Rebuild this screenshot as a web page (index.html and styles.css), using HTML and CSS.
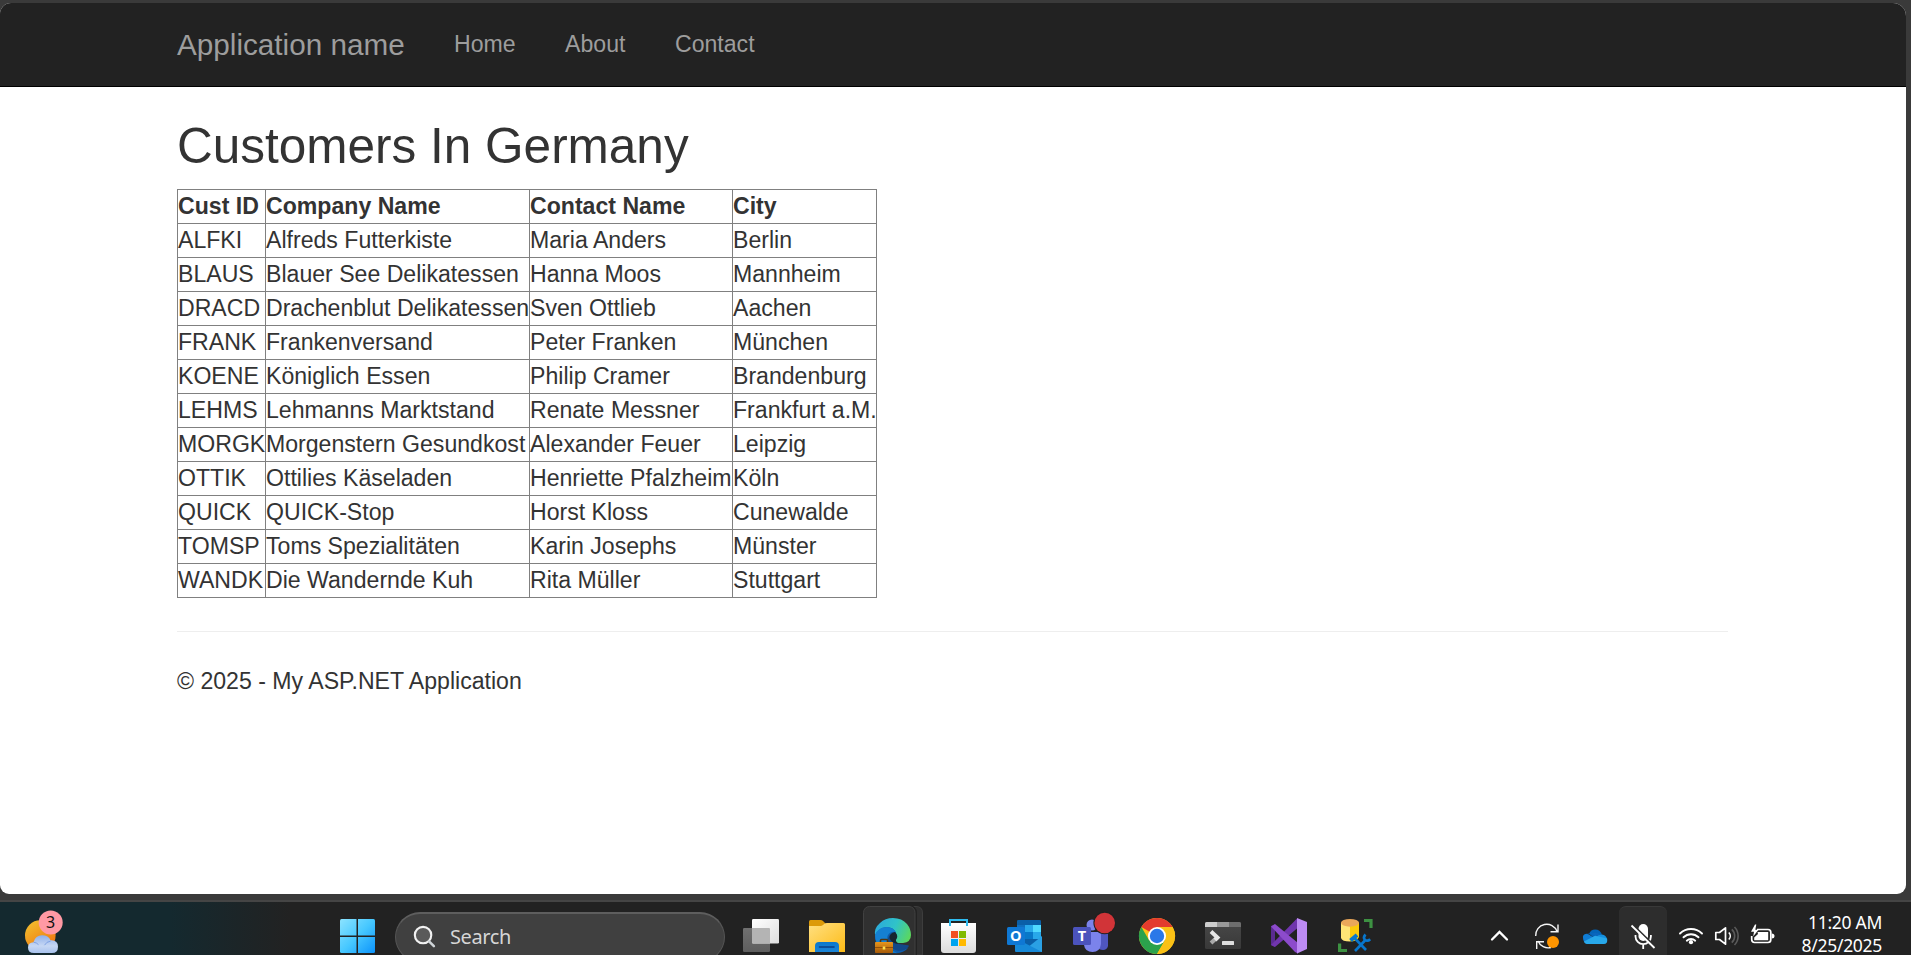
FILE: index.html
```html
<!DOCTYPE html>
<html lang="en">
<head>
<meta charset="utf-8">
<title>Customers In Germany</title>
<link rel="stylesheet" href="styles.css">
</head>
<body>
<div class="page">
  <header class="navbar">
    <nav class="container nav">
      <a class="brand">Application name</a>
      <a class="nav-link">Home</a>
      <a class="nav-link">About</a>
      <a class="nav-link">Contact</a>
    </nav>
  </header>
  <main class="container">
    <h2 class="title">Customers In Germany</h2>
    <table class="grid">
      <colgroup><col class="c-id"><col class="c-company"><col class="c-contact"><col class="c-city"></colgroup>
      <tr><th>Cust ID</th><th>Company Name</th><th>Contact Name</th><th>City</th></tr>
      <tr><td>ALFKI</td><td>Alfreds Futterkiste</td><td>Maria Anders</td><td>Berlin</td></tr>
      <tr><td>BLAUS</td><td>Blauer See Delikatessen</td><td>Hanna Moos</td><td>Mannheim</td></tr>
      <tr><td>DRACD</td><td>Drachenblut Delikatessen</td><td>Sven Ottlieb</td><td>Aachen</td></tr>
      <tr><td>FRANK</td><td>Frankenversand</td><td>Peter Franken</td><td>München</td></tr>
      <tr><td>KOENE</td><td>Königlich Essen</td><td>Philip Cramer</td><td>Brandenburg</td></tr>
      <tr><td>LEHMS</td><td>Lehmanns Marktstand</td><td>Renate Messner</td><td>Frankfurt a.M.</td></tr>
      <tr><td>MORGK</td><td>Morgenstern Gesundkost</td><td>Alexander Feuer</td><td>Leipzig</td></tr>
      <tr><td>OTTIK</td><td>Ottilies Käseladen</td><td>Henriette Pfalzheim</td><td>Köln</td></tr>
      <tr><td>QUICK</td><td>QUICK-Stop</td><td>Horst Kloss</td><td>Cunewalde</td></tr>
      <tr><td>TOMSP</td><td>Toms Spezialitäten</td><td>Karin Josephs</td><td>Münster</td></tr>
      <tr><td>WANDK</td><td>Die Wandernde Kuh</td><td>Rita Müller</td><td>Stuttgart</td></tr>
    </table>
    <hr class="rule">
    <footer class="foot">© 2025 - My ASP.NET Application</footer>
  </main>
</div>

<div class="taskbar">
  <svg class="weather" viewBox="0 0 88 53">
    <defs>
      <linearGradient id="sun" x1="0" y1="0" x2=".7" y2="1"><stop offset="0" stop-color="#f2c531"/><stop offset="1" stop-color="#f0730f"/></linearGradient>
      <linearGradient id="cloud" x1="0" y1="0" x2="0" y2="1"><stop offset="0" stop-color="#8fb0ea"/><stop offset=".6" stop-color="#c6d7f4"/><stop offset="1" stop-color="#a9c3ee"/></linearGradient>
    </defs>
    <circle cx="40.3" cy="33.5" r="15.3" fill="url(#sun)"/>
    <path d="M34 51q-6 0-6-5.500 0-5 5.500-5.300 2-7 8.500-7 6.500 0 8.500 5 7.500-.5 7.500 6.500 0 6.300-6 6.300z" fill="url(#cloud)"/>
    <path d="M33.500 40.200q3 .2 5 2.500M50.500 39.200q-4 .3-6 4" fill="none" stroke="#7fa2e4" stroke-width="1"/>
    <circle cx="50.700" cy="20.500" r="12" fill="#ff99a4"/>
    <text class="badge" x="50.700" y="26.200">3</text>
  </svg>

  <svg class="start" viewBox="0 0 36 53">
    <defs><linearGradient id="win" gradientUnits="userSpaceOnUse" x1="0" y1="17" x2="35" y2="51"><stop offset="0" stop-color="#8ce3ff"/><stop offset=".5" stop-color="#47c8ff"/><stop offset="1" stop-color="#0c93fb"/></linearGradient></defs>
    <g fill="url(#win)"><path d="M1.500 17H16.500V33.500H0V18.500Q0 17 1.500 17z"/><path d="M18 17H33.500Q35 17 35 18.500V33.500H18z"/><path d="M0 35H16.500V51H1.500Q0 51 0 49.500z"/><path d="M18 35H35V49.500Q35 51 33.500 51H18z"/></g>
  </svg>

  <div class="search">
    <svg class="search-icon" viewBox="0 0 24 24"><circle cx="10.500" cy="10.500" r="8.600" fill="#5a5a5a" stroke="#f2f2f2" stroke-width="2.200"/><path d="M16.800 17L21.800 22" stroke="#cfd4d8" stroke-width="2.600" stroke-linecap="round"/></svg>
    <span class="search-label">Search</span>
  </div>

  <div class="apps">
    <svg class="app" viewBox="0 0 66 53">
      <defs><linearGradient id="tv" x1="0" y1="0" x2="1" y2="1"><stop offset="0" stop-color="#fff"/><stop offset="1" stop-color="#dedede"/></linearGradient><linearGradient id="tv2" x1="0" y1="0" x2="0" y2="1"><stop offset="0" stop-color="#707070"/><stop offset="1" stop-color="#5e5e5e"/></linearGradient></defs>
      <rect x="15" y="26" width="27" height="24" rx="1.200" fill="url(#tv2)"/><rect x="24" y="17" width="27" height="24.500" rx="1.200" fill="url(#tv)"/><path d="M24 26H41q1 0 1 1V41.500H25q-1 0-1-1z" fill="#b4b4b4"/>
    </svg>
    <svg class="app" viewBox="0 0 66 53">
      <defs><linearGradient id="fo" x1="0" y1="0" x2="1" y2="1"><stop offset="0" stop-color="#ffe082"/><stop offset="1" stop-color="#fdbb16"/></linearGradient><linearGradient id="fb" x1="0" y1="0" x2="0" y2="1"><stop offset="0" stop-color="#0a78cc"/><stop offset="1" stop-color="#1a85d8"/></linearGradient></defs>
      <path d="M15 19.500q0-1.500 1.500-1.500h10q1.500 0 2.500 1l2.500 2.500V28H15z" fill="#dc9a09"/>
      <path d="M15 24h11.500q1.500 0 2.800-1.200l1.500-1.300q.8-.5 2-.5H49.500q1.500 0 1.500 1.500V50H15z" fill="url(#fo)"/>
      <path d="M21 50V44q0-4 4-4H41q4 0 4 4v6z" fill="url(#fb)"/><path d="M25.500 45H40" stroke="#0a3f85" stroke-width="1.600" stroke-linecap="round"/>
    </svg>
    <svg class="app" viewBox="0 0 66 53">
      <defs>
        <linearGradient id="ed1" gradientUnits="userSpaceOnUse" x1="16" y1="20" x2="51" y2="36"><stop offset="0" stop-color="#2ba9dc"/><stop offset=".5" stop-color="#30c3c8"/><stop offset="1" stop-color="#5fd955"/></linearGradient>
        <linearGradient id="bag" x1="0" y1="0" x2="0" y2="1"><stop offset="0" stop-color="#e7951c"/><stop offset="1" stop-color="#a65a08"/></linearGradient>
      </defs>
      <path d="M44 4.500h12q6.500 0 6.500 6.500V53H52z" fill="#303030" stroke="#3d3d3d"/>
      <rect x="3.500" y="4.500" width="52" height="56" rx="6" fill="#303030" stroke="#222" stroke-width="3"/>
      <rect x="3.500" y="4.500" width="51.500" height="56" rx="6" fill="#303030" stroke="#414141" stroke-width="1"/>
      <path d="M15 33Q14 26 20 21q5-5 13-5 9 0 14 6 4 5 4 11 0 7-8 8-7 .5-8-2-.3-1 1-2.500 2-4-2-7-9-5-19 3.500z" fill="url(#ed1)"/>
      <path d="M15 34q3-8 11-9 8 0 10 6-5-.5-7 4-2 5 3 10 4 4.500 16 1-5 6-14 5-19-1-19-17z" fill="#0d5cab"/>
      <path d="M15 33q3-8 12-8 6 .5 9 5-6-1-8.500 4-1.500 6 2.500 12 2 3 7 4.500-8 1.500-15-4-7-5-7-13.500z" fill="#1580d2"/>
      <path d="M35 31q3 4 0 7-1 3 4 4l7 1q3 0 3 1-4 6-12 4.500-7-2-9-8-1-8 7-9.500z" fill="#124888"/>
      <path d="M35 30q3 3 2 6-1.500 2-1 3l2 3q-7-1-8.500-6 0-5 5.500-6z" fill="#17252f"/>
      <path d="M20.500 40v-1.500q0-1 1-1h5q1 0 1 1V40" fill="none" stroke="#4c3514" stroke-width="1.600"/>
      <rect x="15" y="40" width="18" height="11" rx=".8" fill="url(#bag)"/><path d="M15 45.500H33" stroke="#8a4a08" stroke-width=".9"/><rect x="22.700" y="44.500" width="2.600" height="3" fill="#ffdf4d"/>
    </svg>
    <svg class="app" viewBox="0 0 66 53">
      <defs><linearGradient id="st" x1="0" y1="0" x2="0" y2="1"><stop offset="0" stop-color="#fff"/><stop offset="1" stop-color="#dcdcdc"/></linearGradient></defs>
      <path d="M15 21H50V48q0 3-3 3H18q-3 0-3-3z" fill="url(#st)"/><path d="M24 24V18H41V24" fill="none" stroke="#2fbcf0" stroke-width="2"/>
      <path d="M25 29h7v7h-7z" fill="#f25022"/><path d="M33 29h7v7h-7z" fill="#7fba00"/><path d="M25 37h7v7h-7z" fill="#00a4ef"/><path d="M33 37h7v7h-7z" fill="#ffb900"/>
    </svg>
    <svg class="app" viewBox="0 0 66 53">
      <rect x="25" y="18" width="24" height="26" rx="1.300" fill="#0a5fa8"/><path d="M25 23h8v14h-8z" fill="#0f6fbf"/><path d="M33 23h8v7h-8z" fill="#28a8ea"/><path d="M41 23h8v7h-8z" fill="#50d9ff"/><path d="M33 30h8v7h-8z" fill="#0878c9"/><path d="M41 30h8v7h-8z" fill="#28a8ea"/>
      <path d="M50 34V50H30z" fill="#2aa0e4"/><path d="M23 36l27 14H24q-1 0-1-1z" fill="#1689d8"/>
      <rect x="15" y="25" width="18" height="18" rx="1.500" fill="#0f78d4"/><text class="glyph" x="23.800" y="39.300">O</text>
    </svg>
    <svg class="app" viewBox="0 0 66 53">
      <circle cx="34" cy="23" r="5.500" fill="#7b83eb"/><path d="M41 31h9v13q-1 4-5 4t-6-3z" fill="#4f56be"/><path d="M26 30H42q1 0 1 1V42q-1 8-8.500 8T26 43z" fill="#7b83eb"/>
      <circle cx="46.700" cy="21" r="11.300" fill="#202020"/><circle cx="46.700" cy="21" r="10.300" fill="#d13438"/>
      <rect x="15" y="25" width="18" height="18" rx="1.500" fill="#4b53bc"/><text class="glyph" x="24" y="39.300">T</text>
    </svg>
    <svg class="app" viewBox="0 0 66 53">
      <circle cx="33" cy="34" r="18" fill="#fbc116"/>
      <path d="M33 34L17.400 25A18 18 0 0 1 48.600 25H33z" fill="#e33b2e"/><path d="M17.400 25A18 18 0 0 0 33 52L40.800 38.500 33 34 25.200 38.500z" fill="#2ba24c"/><path d="M33 25H48.600A18 18 0 0 1 33 52L40.800 38.500z" fill="#fbc116"/>
      <circle cx="33" cy="34" r="9" fill="#fff"/><circle cx="33" cy="34" r="7.200" fill="#2b78e8"/>
    </svg>
    <svg class="app" viewBox="0 0 66 53">
      <defs><linearGradient id="te" x1="0" y1="0" x2="0" y2="1"><stop offset="0" stop-color="#484848"/><stop offset="1" stop-color="#393939"/></linearGradient></defs>
      <rect x="15" y="20" width="36" height="27" rx="1.500" fill="url(#te)"/><path d="M16.500 20H27v5H15v-3.500q0-1.500 1.500-1.500z" fill="#cdcdcd"/><path d="M27 20h12v5H27z" fill="#999"/><path d="M39 20h10.500q1.500 0 1.500 1.500V25H39z" fill="#6e6e6e"/>
      <path d="M21 41L27 35.500" stroke="#aaa" stroke-width="4"/><path d="M21 29.500L27.500 35.500 25 38" fill="none" stroke="#e6e6e6" stroke-width="4"/><rect x="32" y="39" width="12" height="4" rx=".6" fill="#dedede"/>
    </svg>
    <svg class="app" viewBox="0 0 66 53">
      <path d="M15 24l4-1.500V45L15 43z" fill="#5a2b91"/><path d="M15 43l26-26.500v10L19 45z" fill="#7035ae"/><path d="M15 24.500l4-2.500 23 19v10.500L39 50z" fill="#8c4bcc"/><path d="M41 16l10 4V47L41 51.500z" fill="#bd8bf4"/>
    </svg>
    <svg class="app" viewBox="4 0 66 53">
      <path d="M46 18.500H53V26" fill="none" stroke="#3d9142" stroke-width="3.200"/><path d="M21.600 41.500V48.500H29" fill="none" stroke="#3d9142" stroke-width="3.200"/>
      <path d="M23 20.500V36q1 3.500 9 3.500V20.500z" fill="#ffe476"/><path d="M32 20.500H41V35q-2 4.500-9 4.500z" fill="#fccb0a"/><ellipse cx="32" cy="20.800" rx="9" ry="3.900" fill="#eaa75a"/>
      <path d="M36 35.500L48 48" stroke="#0876cc" stroke-width="2.600"/><path d="M32.500 38.500l6.500-5.500" stroke="#0876cc" stroke-width="4"/><path d="M37 49L47 38.500" stroke="#0876cc" stroke-width="2.600"/><path d="M47.500 32.500q-2.800 3-.6 5.300 2.600 2 5.300-.6" fill="none" stroke="#0876cc" stroke-width="2.600"/>
    </svg>
  </div>

  <div class="tray">
    <svg class="tray-icon" viewBox="0 0 48 53"><path d="M17 37.500L24.500 30 32 37.500" fill="none" stroke="#fff" stroke-width="2.300" stroke-linecap="round"/></svg>
    <svg class="tray-icon sync" viewBox="8 0 56 53"><g fill="none" stroke="#f5f5f5" stroke-width="1.400"><path d="M20.700 34A11 11 0 0 1 42 29.500M43 22.500V29.700H35.500"/><path d="M36 45.500A11 11 0 0 1 23 39M21.700 47V39.700H29"/></g><circle cx="38" cy="40" r="6" fill="#ff9500"/></svg>
    <svg class="tray-icon od" viewBox="0 0 40 53"><g transform="translate(.6 5.900) scale(.86)"><path d="M4 35q-1-4 4-5 3 0 6 3l8 4 8 4H9Q4 40 4 35z" fill="#0f7cd4"/><path d="M11 30q2-5 7-5 6 0 8 6l-8 5z" fill="#0364b8"/><path d="M8 30q4-1 8 1.500l11 6-3-6.500q-4-3-9-1.500-3 .5-7 .5z" fill="#0a66bd"/><path d="M18 35q4-4 8-4 5 .5 6 6l-8 2z" fill="#1490df"/><path d="M5 39l13-6.500L32 35.500q1 6.500-4 6.500H10Q6 42 5 39z" fill="#28a8ea"/></g></svg>
    <div class="mic"><svg class="tray-icon" viewBox="0 0 48 53"><rect x="19.500" y="22" width="9.500" height="17" rx="4.750" fill="#fff"/><path d="M16.500 33v1.500a7.700 7.700 0 0 0 15.400 0V33M24.200 42v5" fill="none" stroke="#fff" stroke-width="1.800"/><path d="M13.500 22.500L37 45.500" stroke="#2d2d2d" stroke-width="2"/><path d="M12.500 23.500L35.500 46" stroke="#fff" stroke-width="1.800"/></svg></div>
    <svg class="tray-icon wifi" viewBox="0 0 40 53"><g fill="none" stroke="#fff" stroke-width="1.900" stroke-linecap="round"><path d="M9 31.500a15.800 15.800 0 0 1 22 0"/><path d="M12.500 35.300a10.700 10.700 0 0 1 15 0"/><path d="M15.800 38.700a6 6 0 0 1 8.400 0"/></g><circle cx="20" cy="40.200" r="2.100" fill="#fff"/></svg>
    <svg class="tray-icon vol" viewBox="3.500 0 36 53"><path d="M8.300 30.500h3.700l6-4.700V42.200l-6-4.700H8.300z" fill="none" stroke="#fff" stroke-width="1.700" stroke-linejoin="round"/><path d="M21.300 30.500a5 5 0 0 1 0 7" fill="none" stroke="#fff" stroke-width="1.600"/><path d="M24.300 27.300a9.200 9.200 0 0 1 0 13.400M27 25a13 13 0 0 1 0 18" fill="none" stroke="#5b5b5b" stroke-width="1.600"/></svg>
    <svg class="tray-icon bat" viewBox="3.500 0 36 53"><path d="M13.500 27.500H24.500q2.800 0 2.800 2.800V37.500q0 3-2.800 3H11q-2.800 0-2.800-3V34" fill="none" stroke="#fff" stroke-width="1.700"/><path d="M14 30H24.700V38.300H10.700V35.500L14.500 32z" fill="#fff"/><path d="M28.200 31.500q2.800 0 2.800 2.500t-2.800 2.500z" fill="#fff"/><path d="M11.500 22.500L7.500 29.800h3L9.700 34.500 15 27.800h-3.200l1-5.300z" fill="#fff"/></svg>
    <div class="clock"><span class="time">11:20 AM</span><span class="date">8/25/2025</span></div>
  </div>
</div>
</body>
</html>
```

FILE: styles.css
```css
* { box-sizing: border-box; }

body {
  margin: 0;
  height: 955px;
  overflow: hidden;
  background: #3a3a3a;
  display: flex;
  flex-direction: column;
  font-family: "Liberation Sans", Arial, sans-serif;
  font-size: 23.1px;
  line-height: 33px;
  color: #333;
}

/* Browser page */
.page {
  flex: none;
  width: 1906px;
  height: 891px;
  margin-top: 3px;
  background: #fff;
  border-radius: 11px 13px 9px 9px;
  overflow: hidden;
}

.navbar {
  height: 84px;
  background: #222;
  border-bottom: 1px solid #000;
}

.container {
  width: 1551px;
  margin-left: 177px;
}

.nav {
  display: flex;
  color: #9d9d9d;
}

.brand {
  width: 277px;
  padding-top: 25px;
  font-size: 29.7px;
  white-space: nowrap;
}

.nav-link {
  padding-top: 25px;
  margin-right: 49.5px;
}

.title {
  margin: 0;
  padding-top: 32px;
  height: 102px;
  font-size: 49.5px;
  line-height: 54.5px;
  font-weight: 500;
}

.grid {
  width: 700px;
  table-layout: fixed;
  border-collapse: collapse;
  white-space: nowrap;
}

.c-id { width: 88px; }
.c-company { width: 264px; }
.c-contact { width: 203px; }
.c-city { width: 144px; }

.grid th,
.grid td {
  height: 34px;
  padding: 0;
  border: 1px solid #808080;
  text-align: left;
}

.rule {
  margin: 33px 0;
  border: 0;
  border-top: 1px solid #eee;
}

/* Taskbar */
.taskbar {
  flex: none;
  height: 55px;
  margin-top: 6px;
  border-top: 2px solid #454545;
  background: linear-gradient(90deg, #14292f 0, #14292f 170px, #222 290px);
  display: flex;
  align-items: flex-start;
  overflow: hidden;
  font-family: "Noto Sans", "Open Sans", sans-serif;
}

.weather { width: 88px; height: 53px; flex: none; }
.start { width: 36px; height: 53px; margin-left: 252px; flex: none; }

.badge {
  font-size: 16px;
  text-anchor: middle;
  fill: #111;
}

.glyph {
  font: bold 14.5px "Open Sans", sans-serif;
  text-anchor: middle;
  fill: #fff;
}

.search {
  flex: none;
  width: 330px;
  height: 50px;
  margin: 10px 3px 0 19px;
  padding: 0 0 3px 17px;
  border: 1px solid #555;
  border-top: 2px solid #5e5e5e;
  border-radius: 25px;
  background: #404040;
  display: flex;
  align-items: center;
}

.search-icon { width: 23px; height: 23px; }

.search-label {
  margin-left: 14px;
  font-size: 20px;
  letter-spacing: -0.4px;
  color: #d6d6d6;
}

.apps { display: flex; flex: none; }
.app { width: 66px; height: 53px; }

.tray {
  display: flex;
  flex: none;
  margin-left: 87px;
}

.tray-icon { width: 48px; height: 53px; flex: none; display: block; }
.tray-icon.sync { width: 56px; }
.tray-icon.od { width: 40px; }
.tray-icon.wifi { width: 40px; margin-left: 4px; }
.tray-icon.vol, .tray-icon.bat { width: 36px; }

.mic {
  width: 48px;
  height: 60px;
  margin-top: 4px;
  border-radius: 7px;
  background: #2d2d2d;
  border-top: 1px solid #393939;
}
.mic .tray-icon { margin-top: -5px; }

.clock {
  width: 99px;
  padding-top: 9px;
  display: flex;
  flex-direction: column;
  align-items: flex-end;
  color: #fff;
  font-size: 17.5px;
  line-height: 23px;
  letter-spacing: -0.3px;
  white-space: nowrap;
}
```
